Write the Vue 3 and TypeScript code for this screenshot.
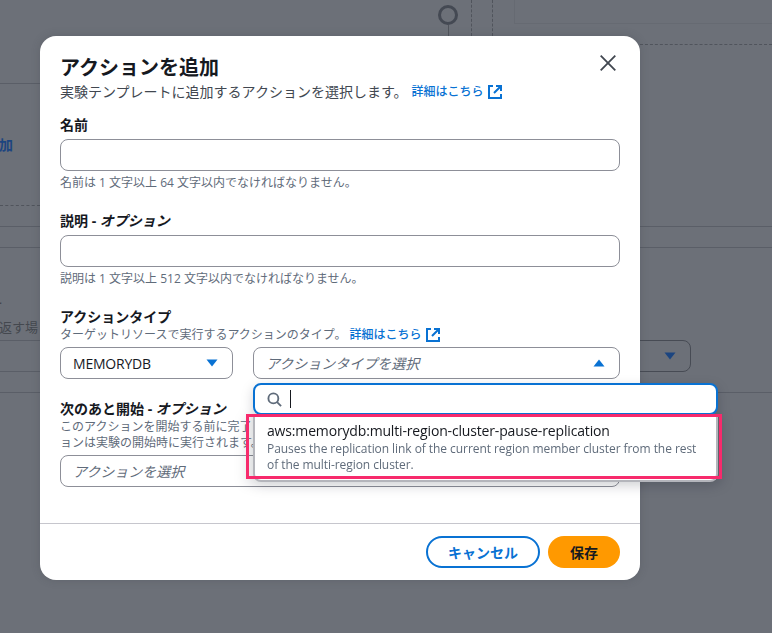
<script setup lang="ts">
const fullLines = [226, 247, 392]
const leftLines = [83, 340, 371]
</script>

<template>
  <div class="page">
    <div class="backdrop" aria-hidden="true">
      <i v-for="y in fullLines" :key="y" class="rule" :style="{ top: y + 'px' }"></i>
      <i v-for="y in leftLines" :key="y" class="rule short" :style="{ top: y + 'px' }"></i>
      <i class="dash-h left"></i>
      <i class="dash-h right"></i>
      <i class="node"></i>
      <i class="stem"></i>
      <i class="dash-v one"></i>
      <i class="dash-v two"></i>
      <i class="box"></i>
      <span class="bg-add">加</span>
      <span class="bg-dot">.</span>
      <span class="bg-text">を返す場</span>
      <i class="bg-select"><svg width="12" height="8" viewBox="0 0 12 8"><path d="M0.5 0.5h11L6 7.5z" fill="#1c4580" /></svg></i>
    </div>

    <section class="modal">
      <header class="head">
        <div>
          <h1>アクションを追加</h1>
          <p class="intro">
            実験テンプレートに追加するアクションを選択します。
            <a class="link">詳細はこちら
              <svg class="ext" width="14" height="14" viewBox="0 0 14 14" fill="none" stroke="#0972d3" stroke-width="2"><path d="M5 1H1v12h12V9" /><path d="M8 1h5v5M13 1 6 8" /></svg>
            </a>
          </p>
        </div>
        <button class="close" aria-label="閉じる">
          <svg width="16" height="16" viewBox="0 0 16 16" fill="none" stroke="#414750" stroke-width="1.8"><path d="M.7.7l14.6 14.6M15.3.7.7 15.3" /></svg>
        </button>
      </header>

      <div class="body">
        <div class="field f-name">
          <label>名前</label>
          <div class="input"></div>
          <p class="hint">名前は 1 文字以上 64 文字以内でなければなりません。</p>
        </div>
        <div class="field f-rest">
          <label>説明 - <em>オプション</em></label>
          <div class="input"></div>
          <p class="hint">説明は 1 文字以上 512 文字以内でなければなりません。</p>
        </div>
        <div class="field f-rest">
          <label>アクションタイプ</label>
          <p class="desc">ターゲットリソースで実行するアクションのタイプ。 <a class="link">詳細はこちら
            <svg class="ext" width="14" height="14" viewBox="0 0 14 14" fill="none" stroke="#0972d3" stroke-width="2"><path d="M5 1H1v12h12V9" /><path d="M8 1h5v5M13 1 6 8" /></svg></a></p>
          <div class="selects">
            <div class="input select small">
              <span class="value">MEMORYDB</span>
              <svg width="12" height="8" viewBox="0 0 12 8"><path d="M0.5 0.5h11L6 7.5z" fill="#0972d3" /></svg>
            </div>
            <div class="input select grow">
              <span class="placeholder">アクションタイプを選択</span>
              <svg width="12" height="8" viewBox="0 0 12 8"><path d="M0.5 7.5h11L6 0.5z" fill="#0972d3" /></svg>
            </div>
          </div>
        </div>
        <div class="field f-rest">
          <label>次のあと開始 - <em>オプション</em></label>
          <p class="desc clip">このアクションを開始する前に完了<br />ョンは実験の開始時に実行されます。</p>
          <div class="input select">
            <span class="placeholder">アクションを選択</span>
          </div>
        </div>
      </div>

      <footer class="foot">
        <button class="btn ghost">キャンセル</button>
        <button class="btn primary">保存</button>
      </footer>

      <div class="dropdown">
        <div class="search">
          <svg width="15" height="15" viewBox="0 0 16 16" fill="none" stroke="#5f6b7a" stroke-width="2"><circle cx="6.8" cy="6.8" r="5.3" /><path d="M10.8 10.8 15 15" /></svg>
          <i class="caret"></i>
        </div>
        <div class="list">
          <div class="option-title">aws:memorydb:multi-region-cluster-pause-replication</div>
          <div class="option-desc">Pauses the replication link of the current region member cluster from the rest of the multi-region cluster.</div>
          <i class="highlight"></i>
        </div>
      </div>
    </section>
  </div>
</template>

<style>
html, body { margin: 0; background: #6c7078; }
</style>

<style scoped>
.page {
  position: relative;
  width: 772px;
  height: 633px;
  overflow: hidden;
  background: #6c7078;
  font-family: "Open Sans", "Noto Sans CJK JP", sans-serif;
  color: #16191f;
}
.backdrop { position: absolute; inset: 0; }
.backdrop i { position: absolute; display: block; }
.rule { left: 0; right: 0; height: 1px; background: #5a5e67; }
.rule.short { right: auto; width: 40px; }
.dash-h { height: 0; border-top: 1px dashed #50545c; }
.dash-h.left { left: 0; width: 40px; top: 205px; }
.dash-h.right { left: 640px; right: 0; top: 44px; }
.node { left: 438px; top: 5px; width: 14px; height: 14px; border: 3px solid #444953; border-radius: 50%; }
.stem { left: 448px; top: 25px; width: 1px; height: 12px; background: #50545c; }
.dash-v { top: 0; height: 36px; border-left: 1px dashed #50545c; }
.dash-v.one { left: 471px; }
.dash-v.two { left: 492px; }
.box { left: 514px; top: -4px; right: -4px; height: 26px; border: 1px solid #666a72; }
.bg-add { position: absolute; left: -1px; top: 136px; font-size: 14px; line-height: 18px; font-weight: 700; color: #1c4580; }
.bg-dot { position: absolute; left: -1px; top: 292px; font-size: 12px; line-height: 16px; color: #3c4048; }
.bg-text { position: absolute; left: -14px; top: 319px; font-size: 13px; line-height: 17px; color: #44484f; }
.backdrop .bg-select {
  left: 600px; top: 340px; width: 91px; height: 32px;
  box-sizing: border-box;
  border: 1px solid #474b54; border-radius: 8px;
  display: flex; align-items: center; justify-content: flex-end; padding-right: 14px;
}

.modal {
  position: absolute;
  left: 40px;
  top: 36px;
  width: 600px;
  height: 544px;
  box-sizing: border-box;
  display: flex;
  flex-direction: column;
  background: #fff;
  border-radius: 16px;
  box-shadow: 0 0 8px rgba(60, 64, 72, .25);
}
.head { display: flex; justify-content: space-between; padding: 18px 20px 0; }
h1 { margin: 0; font-size: 20px; line-height: 28px; font-weight: 700; color: #16191f; }
.intro { margin: 0; height: 20px; font-size: 14px; line-height: 20px; color: #414750; display: flex; align-items: center; white-space: nowrap; }
.link { color: #0972d3; font-size: 12px; font-weight: 500; display: inline-flex; align-items: center; gap: 4px; }
.intro .link { margin-left: 4px; }
.close { border: 0; padding: 0; background: none; width: 16px; height: 16px; margin: 1px 4px 0 0; display: block; }
.body { padding: 0 20px; flex: 1; }
.field label { display: block; font-size: 14px; line-height: 20px; font-weight: 700; color: #16191f; }
.field em { font-style: italic; }
.f-name { margin-top: 13px; }
.f-rest { margin-top: 20px; }
.input {
  box-sizing: border-box;
  height: 32px;
  margin-top: 4px;
  border: 1px solid #8d8f98;
  border-radius: 8px;
  background: #fff;
}
.hint { margin: 4px 0 0; font-size: 12px; line-height: 16px; color: #5f6b7a; }
.desc { margin: 0; font-size: 12px; line-height: 16px; color: #5f6b7a; }
.selects { display: flex; gap: 20px; }
.select { display: flex; align-items: center; justify-content: space-between; padding: 0 14px 0 12px; }
.select.small { width: 173px; }
.select.grow { flex: 1; }
.value { font-size: 14px; letter-spacing: -.2px; color: #16191f; }
.placeholder { font-size: 14px; font-style: italic; color: #5f6b7a; }
.foot {
  height: 56px;
  border-top: 1px solid #c6c6cd;
  display: flex;
  justify-content: flex-end;
  align-items: center;
  gap: 8px;
  padding: 0 20px;
}
.btn {
  height: 32px;
  box-sizing: border-box;
  border-radius: 16px;
  font: 700 14px "Open Sans", "Noto Sans CJK JP", sans-serif;
  padding: 0;
}
.ghost { width: 114px; background: #fff; border: 2px solid #0972d3; color: #0972d3; }
.primary { width: 72px; background: #ff9900; border: 0; color: #16191f; }

.dropdown {
  position: absolute;
  left: 213px;
  top: 347px;
  width: 465px;
  filter: drop-shadow(0 4px 6px rgba(0, 7, 22, .18));
}
.search {
  height: 32px;
  box-sizing: border-box;
  display: flex;
  align-items: center;
  gap: 8px;
  padding: 0 12px;
  background: #fff;
  border: 2px solid #0972d3;
  border-radius: 8px;
}
.caret { display: block; width: 1px; height: 18px; background: #16191f; }
.list {
  position: relative;
  box-sizing: border-box;
  height: 67px;
  padding: 6px 12px 0;
  background: #fff;
  border: 2px solid #b4b5bb;
  border-top: 0;
  border-radius: 0 0 8px 8px;
}
.option-title { font-size: 14px; line-height: 20px; letter-spacing: -.16px; color: #16191f; white-space: nowrap; }
.option-desc { font-size: 12px; line-height: 16px; letter-spacing: -.06px; color: #5f6b7a; }
.highlight {
  position: absolute;
  left: -9px;
  right: -6px;
  top: -1px;
  height: 65px;
  border: 3px solid #f72a6c;
  box-sizing: border-box;
  display: block;
}
</style>
